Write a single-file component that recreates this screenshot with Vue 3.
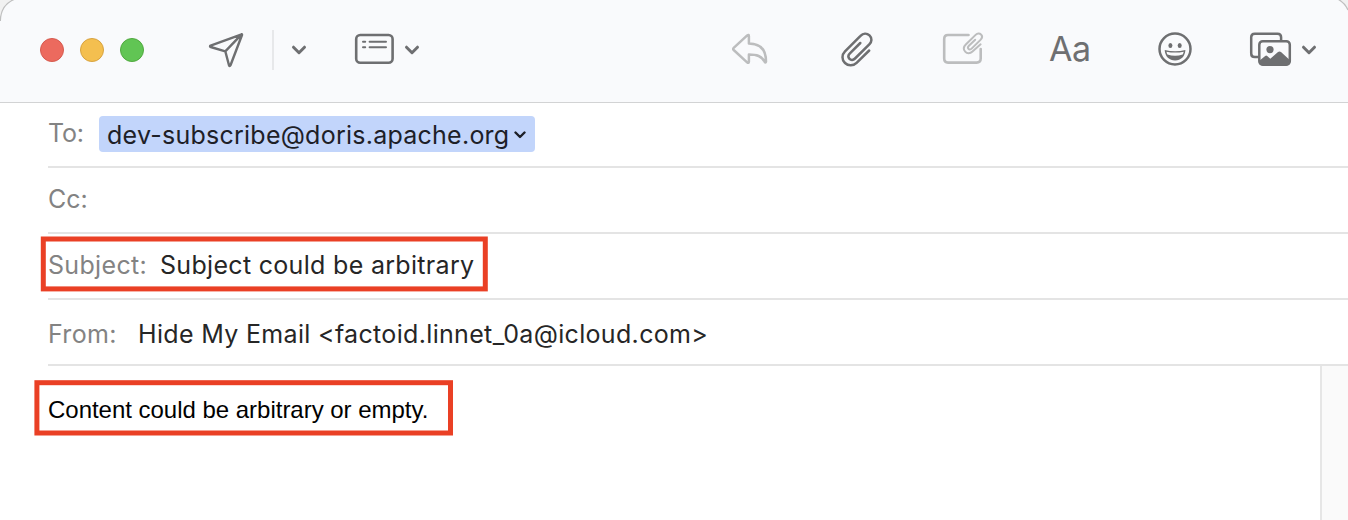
<script setup>
import { ref } from 'vue'

const lights = ['red', 'yellow', 'green']
const recipient = ref('dev-subscribe@doris.apache.org')
const subject = ref('Subject could be arbitrary')
const sender = ref('Hide My Email <factoid.linnet_0a@icloud.com>')
const message = ref('Content could be arbitrary or empty.')
</script>

<template>
  <main class="window">
    <header class="toolbar">
      <svg class="corner left" width="20" height="24" viewBox="0 0 20 24">
        <path class="outside" d="M0 0H13C5 4 0 11 0 21Z" />
        <path class="edge" d="M14 -0.5C6 3 0.5 10 .3 21" />
      </svg>
      <svg class="corner right" width="12" height="14" viewBox="0 0 12 14">
        <path class="outside" d="M3 0H12V10C10 6 7 2 3 0Z" />
        <path class="edge" d="M2.5 -0.5C7 2 10 5.500 12 10" />
      </svg>

      <div class="lights">
        <i v-for="light in lights" :key="light" :class="light"></i>
      </div>
      <svg class="icon send" width="38" height="40" viewBox="207 30 38 40">
        <path d="M241.600 34.300 210.600 45.600Q209.400 46.300 210.700 47L225.300 51.300 229 65.300Q229.700 66.900 230.500 65.300L242 35Q242.200 34.100 241.600 34.300ZM241.600 34.300 225.300 51.300" />
      </svg>
      <span class="divider"></span>
      <svg class="icon chev send-chev" width="18" height="14" viewBox="0 0 18 14">
        <path d="M3.500 4.200 9 9.700l5.500-5.500" />
      </svg>
      <svg class="icon header-fields" width="42" height="34" viewBox="353 32 42 34">
        <rect x="356.200" y="35" width="36.400" height="27.800" rx="4" />
        <path class="thin" d="M363 41.700h2.200M369.600 41.700h16.400M363 47.200h2.200M369.600 47.200h16.400" />
      </svg>
      <svg class="icon chev fields-chev" width="18" height="14" viewBox="0 0 18 14">
        <path d="M3.500 4.200 9 9.700l5.500-5.500" />
      </svg>

      <svg class="icon muted reply" width="40" height="36" viewBox="730 32 40 36">
        <path d="M733.700 47.900 747.200 35.400Q748.900 34.200 748.900 36.200V43.400C760 43.400 766 49.500 766 61.600Q765.600 63.200 764.600 61.700C761.500 56 757 54.600 748.900 54.600V61.600Q748.800 63.700 747.100 62.300L733.700 50Q732.600 48.900 733.700 47.900Z" />
      </svg>
      <svg class="icon clip" width="38" height="40" viewBox="838 30 38 40">
        <path d="M869.200 50.500 856.600 62.800C853.300 66 848.400 66.300 845 63C841.600 59.600 841.700 54.700 845 51.300L860.500 35.900C863.100 33.200 866.800 33 869.500 35.400C872.200 38 872 41.700 869.300 44.400L855 58.500C853.200 60.300 850.900 60.300 849.500 58.800C848.100 57.300 848.100 55.100 849.900 53.300L860.300 43" />
      </svg>
      <svg class="icon muted markup" width="44" height="38" viewBox="941 29 44 38">
        <path d="M968.500 35H948Q944.200 35 944.200 39V58.600Q944.200 62.600 948 62.600H976.600Q980.700 62.600 980.700 58.600V49" />
        <path class="small-clip" d="M980.600 44.300 972.500 51.500C970 53.800 967 53.700 965.200 51.700C963.400 49.700 963.500 46.800 965.800 44.500L975.600 34.900C977.400 33.100 979.600 33 981 34.500C982.500 36 982.200 38.200 980.500 39.900L971.600 48.600C970.500 49.700 969.200 49.700 968.500 48.900C967.700 48 967.800 46.800 968.900 45.700L975.200 39.700" />
      </svg>
      <span class="format">Aa</span>
      <svg class="icon smile" width="38" height="38" viewBox="1155.600 30 38 38">
        <circle cx="1174.600" cy="49" r="15.500" />
        <ellipse class="solid" cx="1170" cy="45.400" rx="2" ry="2.500" />
        <ellipse class="solid" cx="1179.300" cy="45.400" rx="2" ry="2.500" />
        <path class="solid" d="M1164.300 50Q1174.700 52.500 1185 50C1184.700 56.500 1180.500 60.400 1174.700 60.400S1164.600 56.500 1164.300 50Z" />
        <path class="teeth" d="M1166.100 51.700Q1174.700 53.500 1183.300 51.700Q1183 53.300 1182.300 54.500Q1174.700 57 1167 54.500Q1166.400 53.300 1166.100 51.700Z" />
      </svg>
      <svg class="icon photos" width="46" height="38" viewBox="1248 30 46 38">
        <path d="M1258 57H1254.800Q1251.200 57 1251.200 53.400V37.300Q1251.200 33.700 1254.800 33.700H1277.500Q1281.100 33.700 1281.100 37.300V40" />
        <rect x="1259.300" y="41.200" width="30.500" height="23.500" rx="3.500" />
        <circle class="solid" cx="1270" cy="49.600" r="3.600" />
        <path class="solid" d="M1259 61 1265.200 56Q1266.200 55.200 1267.200 56L1270.300 58.700 1278 52Q1279.500 50.900 1281 52L1290 60.200V62Q1290 65.500 1286.500 65.500H1262.500Q1259 65.500 1259 62Z" />
      </svg>
      <svg class="icon chev photos-chev" width="18" height="14" viewBox="0 0 18 14">
        <path d="M3.500 4.200 9 9.700l5.500-5.500" />
      </svg>
    </header>

    <section class="fields">
      <div class="row to">
        <label>To:</label>
        <span class="token">
          <span class="address">{{ recipient }}</span>
          <svg width="12" height="8" viewBox="0 0 12 8"><path d="M1.500 1.500 6 6l4.500-4.500" /></svg>
        </span>
      </div>
      <div class="row cc"><label>Cc:</label></div>
      <div class="row subject">
        <label>Subject:</label><span class="value">{{ subject }}</span>
        <svg class="mark" width="448" height="56"><rect x="3.300" y="3" width="442" height="49.900" /></svg>
      </div>
      <div class="row from">
        <label>From:</label><span class="value">{{ sender }}</span>
      </div>
    </section>

    <section class="body">
      <div class="editor">
        <p>{{ message }}</p>
        <svg class="mark" width="420" height="57"><rect x="2.900" y="2.700" width="413.600" height="50.300" /></svg>
      </div>
      <aside class="scrollbar"></aside>
    </section>
  </main>
</template>

<style>
body {
  margin: 0;
  overflow: hidden;
}
</style>

<style scoped>
.window {
  width: 1348px;
  height: 520px;
  display: flex;
  flex-direction: column;
  overflow: hidden;
  background: #fff;
  color: #262626;
  font-family: Inter, "Liberation Sans", sans-serif;
  font-size: 25px;
}
.toolbar {
  position: relative;
  box-sizing: border-box;
  flex: none;
  height: 103px;
  padding-left: 40px;
  display: flex;
  align-items: flex-start;
  background: #f9fafc;
  border-bottom: 1px solid #d2d3d4;
}
.corner { position: absolute; top: 0; }
.corner.left { left: 0; }
.corner.right { right: 0; }
.outside { fill: #f1f1f1; }
.edge { fill: none; stroke: #bfbfbf; stroke-width: 1.3; }
.lights { display: flex; gap: 16px; margin-top: 38px; }
.lights i {
  width: 24px;
  height: 24px;
  box-sizing: border-box;
  border-radius: 50%;
  border: 1px solid;
}
.lights .red { background: #ec6a5e; border-color: #d65a4f; }
.lights .yellow { background: #f4bf4f; border-color: #d8a340; }
.lights .green { background: #61c554; border-color: #51a93f; }
.icon {
  flex: none;
  fill: none;
  stroke: #6e6f71;
  stroke-width: 2.5;
  stroke-linecap: round;
  stroke-linejoin: round;
}
.icon .solid { fill: #6e6f71; stroke: none; }
.icon .thin { stroke-width: 2; }
.icon .teeth { fill: #f9fafc; stroke: none; }
.muted { stroke: #bcbdbe; }
.small-clip { stroke-width: 2; }
.chev { stroke-width: 3; margin-top: 43px; }
.send { margin: 30px 0 0 63px; stroke-width: 2.4; }
.divider { width: 2px; height: 40px; margin: 30px 0 0 27px; background: #e7e8ea; }
.send-chev { margin-left: 16px; }
.header-fields { margin: 32px 0 0 45px; stroke-width: 2.6; }
.fields-chev { margin-left: 8px; }
.reply { margin: 32px 0 0 309px; }
.clip { margin: 30px 0 0 68px; }
.markup { margin: 29px 0 0 65px; stroke-width: 2.6; }
.format {
  width: 44px;
  margin: 28px 0 0 64px;
  line-height: 42px;
  font-size: 34px;
  letter-spacing: -0.5px;
  color: #6e6f71;
}
.smile { margin: 30px 0 0 63px; }
.photos { margin: 30px 0 0 54px; }
.photos-chev { margin-left: 6px; }

.fields { flex: none; }
.row {
  position: relative;
  box-sizing: border-box;
  height: 66px;
  margin-left: 48px;
  border-bottom: 2px solid #e4e4e4;
  display: flex;
  align-items: flex-start;
  line-height: 36px;
  white-space: pre;
}
.row label { color: #838383; }
.to { height: 65px; }
.to label { width: 51px; margin-top: 12px; letter-spacing: -0.2px; }
.token {
  box-sizing: border-box;
  width: 436px;
  height: 36px;
  margin-top: 13px;
  padding-left: 8px;
  border-radius: 4px;
  background: #c2d5fb;
  display: flex;
  align-items: center;
}
.address { width: 407px; line-height: 36px; padding-top: 2px; letter-spacing: 0.25px; color: #1d2027; }
.token svg { margin-top: 2px; fill: none; stroke: #1d2027; stroke-width: 2.4; stroke-linecap: round; stroke-linejoin: round; }
.cc label { margin-top: 13px; }
.subject label { width: 112px; margin-top: 13px; letter-spacing: 0.33px; }
.subject .value { margin-top: 13px; letter-spacing: 0.31px; }
.from label { width: 90px; margin-top: 16px; letter-spacing: 0.33px; }
.from .value { margin-top: 16px; letter-spacing: 0.33px; }
.mark { position: absolute; fill: none; stroke: #ea4025; stroke-width: 5; }
.subject .mark { left: -8px; top: 2px; }

.body { flex: 1; display: flex; }
.editor { position: relative; flex: 1; }
.editor p {
  margin: 30px 0 0 48px;
  font-family: "Liberation Sans", sans-serif;
  font-size: 24px;
  line-height: 28px;
  letter-spacing: -0.02px;
  color: #000;
}
.editor .mark { left: 34px; top: 14px; }
.scrollbar { box-sizing: border-box; width: 28px; background: #fafafa; border-left: 2px solid #e6e6e6; }
</style>
